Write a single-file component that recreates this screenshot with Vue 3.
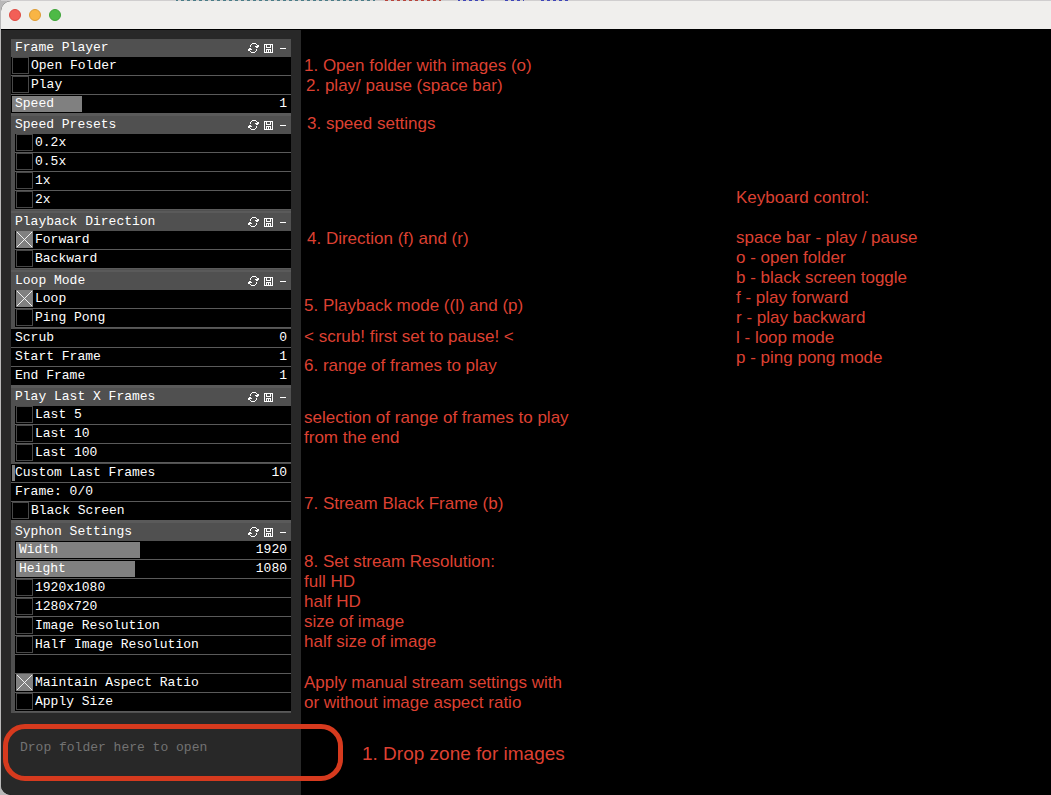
<script setup>
import { reactive } from 'vue'

const sections = reactive([
  { root: true, label: 'Frame Player', items: [
    { type: 'check', label: 'Open Folder' },
    { type: 'check', label: 'Play' },
    { type: 'slider', label: 'Speed', value: 1, min: 0, max: 4, fill: 25 },
  ] },
  { label: 'Speed Presets', items: [
    { type: 'check', label: '0.2x' },
    { type: 'check', label: '0.5x' },
    { type: 'check', label: '1x' },
    { type: 'check', label: '2x' },
  ] },
  { label: 'Playback Direction', items: [
    { type: 'check', label: 'Forward', on: true },
    { type: 'check', label: 'Backward' },
  ] },
  { label: 'Loop Mode', items: [
    { type: 'check', label: 'Loop', on: true },
    { type: 'check', label: 'Ping Pong' },
  ] },
  { bare: true, items: [
    { type: 'slider', label: 'Scrub', value: 0, min: 0, max: 100, fill: 0 },
    { type: 'slider', label: 'Start Frame', value: 1, min: 1, max: 100, fill: 0 },
    { type: 'slider', label: 'End Frame', value: 1, min: 1, max: 100, fill: 0 },
  ] },
  { label: 'Play Last X Frames', items: [
    { type: 'check', label: 'Last 5' },
    { type: 'check', label: 'Last 10' },
    { type: 'check', label: 'Last 100' },
  ] },
  { bare: true, items: [
    { type: 'slider', label: 'Custom Last Frames', value: 10, min: 1, max: 1000, fill: 1 },
    { type: 'text', label: 'Frame: 0/0' },
    { type: 'check', label: 'Black Screen' },
  ] },
  { label: 'Syphon Settings', items: [
    { type: 'slider', label: 'Width', value: 1920, min: 1, max: 4096, fill: 45 },
    { type: 'slider', label: 'Height', value: 1080, min: 1, max: 2480, fill: 43 },
    { type: 'check', label: '1920x1080' },
    { type: 'check', label: '1280x720' },
    { type: 'check', label: 'Image Resolution' },
    { type: 'check', label: 'Half Image Resolution' },
    { type: 'text', label: '' },
    { type: 'check', label: 'Maintain Aspect Ratio', on: true },
    { type: 'check', label: 'Apply Size' },
  ] },
])

const notes = [
  { x: 3, y: 26, text: '1. Open folder with images (o)' },
  { x: 5, y: 46, text: '2. play/ pause (space bar)' },
  { x: 6, y: 84, text: '3. speed settings' },
  { x: 6, y: 199, text: '4. Direction (f) and (r)' },
  { x: 3, y: 266, text: '5. Playback mode ((l) and (p)' },
  { x: 3, y: 297, text: '< scrub! first set to pause! <' },
  { x: 3, y: 326, text: '6. range of frames to play' },
  { x: 3, y: 378, text: 'selection of range of frames to play\nfrom the end' },
  { x: 3, y: 464, text: '7. Stream Black Frame (b)' },
  { x: 3, y: 522, text: '8. Set stream Resolution:\nfull HD\nhalf HD\nsize of image\nhalf size of image' },
  { x: 3, y: 643, text: 'Apply manual stream settings with\nor without image aspect ratio' },
  { x: 61, y: 714, text: '1. Drop zone for images', big: true },
  { x: 435, y: 158, text: 'Keyboard control:\n\nspace bar - play / pause\no - open folder\nb - black screen toggle\nf - play forward\nr - play backward\nl - loop mode\np - ping pong mode' },
]
</script>

<template>
  <div class="desktop">
    <div class="behind"></div>
    <div class="window">
      <header class="titlebar">
        <button class="light close" aria-label="Close"></button>
        <button class="light minimize" aria-label="Minimize"></button>
        <button class="light maximize" aria-label="Zoom"></button>
      </header>
      <div class="body">
        <aside class="side">
          <div class="panel">
            <section v-for="(s, i) in sections" :key="i" :class="{ group: !s.root && !s.bare }">
              <h2 v-if="!s.bare" class="head">
                <span class="title">{{ s.label }}</span>
                <button class="tool" aria-label="Reload">
                  <svg width="11" height="10" viewBox="0 0 11 10" shape-rendering="crispEdges" fill="currentColor">
                    <path d="M4 0h4v1H4zM3 1h1v1H3zM8 1h1v1H8zM2 2h1v2H2zM9 2h2v1H9zM7 3h4v1H7zM8 4h2v1H8zM1 5h2v1H1zM0 6h4v1H0zM0 7h2v1H0zM8 6h1v2H8zM2 8h1v1H2zM7 8h1v1H7zM3 9h4v1H3z" />
                  </svg>
                </button>
                <button class="tool" aria-label="Save">
                  <svg width="9" height="9" viewBox="0 0 9 9" shape-rendering="crispEdges" fill="currentColor">
                    <path fill-rule="evenodd" d="M0 0h9v9H0zM1 1v7h1V5h5v3h1V1H7v3H2V1zM3 1v2h3V1zM3 6v2h1V6zM5 6v2h1V6z" />
                  </svg>
                </button>
                <button class="tool" aria-label="Collapse">
                  <svg width="8" height="9" viewBox="0 0 8 9" shape-rendering="crispEdges" fill="currentColor">
                    <path d="M2 4h6v1H2z" />
                  </svg>
                </button>
              </h2>
              <template v-for="(it, j) in s.items" :key="j">
                <label v-if="it.type === 'check'" class="row check">
                  <input v-model="it.on" type="checkbox" />
                  <svg class="box" :class="{ on: it.on }" width="17" height="17" viewBox="0 0 17 17">
                    <path v-if="it.on" d="M0 0l17 17M17 0L0 17" />
                  </svg>
                  <span>{{ it.label }}</span>
                </label>
                <label v-else-if="it.type === 'slider'" class="row slider">
                  <input v-model="it.value" type="range" :min="it.min" :max="it.max" />
                  <span class="fill" :style="{ width: it.fill + '%' }"></span>
                  <span class="name">{{ it.label }}</span>
                  <span class="value">{{ it.value }}</span>
                </label>
                <div v-else class="row text">{{ it.label }}</div>
              </template>
            </section>
          </div>
          <p class="hint">Drop folder here to open</p>
          <div class="zone"></div>
        </aside>
        <main class="canvas">
          <p
            v-for="n in notes"
            :key="n.text"
            class="note"
            :class="{ big: n.big }"
            :style="{ left: n.x + 'px', top: n.y + 'px' }"
          >{{ n.text }}</p>
        </main>
      </div>
    </div>
  </div>
</template>

<style>
body {
  background: #b9b8b8;
}
</style>

<style scoped>
.desktop {
  box-sizing: border-box;
  min-height: 100vh;
  padding-left: 1px;
  display: flex;
  flex-direction: column;
  background: #b9b8b8;
}
/* Sliver of the code editor that shows above the window */
.behind {
  height: 1px;
  background:
    repeating-linear-gradient(90deg, transparent 0 3px, #d0cecf 3px 6px),
    linear-gradient(90deg, #d0cecf 175px, #4b7d88 175px 374px, #d0cecf 374px 384px, #b8443c 384px 440px, #d0cecf 440px 457px, #4046b8 457px 485px, #d0cecf 485px 502px, #4046b8 502px 523px, #d0cecf 523px 539px, #4046b8 539px 568px, #d0cecf 568px);
}
.window {
  flex: 1;
  display: flex;
  flex-direction: column;
  border-radius: 10px 0 0 10px;
  overflow: hidden;
  background: #000;
}
.titlebar {
  height: 28px;
  display: flex;
  align-items: center;
  gap: 8px;
  padding-left: 8px;
  background: #f0efed;
}
.light {
  width: 12px;
  height: 12px;
  padding: 0;
  border: 1px solid;
  border-radius: 50%;
}
.close { background: #f25f57; border-color: #dc4a41; }
.minimize { background: #f9b544; border-color: #dc9b33; }
.maximize { background: #4dba46; border-color: #3da237; }
.body {
  flex: 1;
  display: flex;
  border-top: 1px solid #000;
}
.side {
  position: relative;
  box-sizing: border-box;
  width: 300px;
  flex: none;
  padding: 9px 10px 0;
  background: #282828;
  font: 13px/18px "Liberation Mono", monospace;
  color: #fff;
}
.panel {
  display: flow-root;
}
.group {
  border-left: 4px solid #505050;
  border-bottom: 1px solid #505050;
}
.head {
  display: flex;
  align-items: center;
  gap: 5px;
  height: 18px;
  margin: 0;
  padding: 0 5px 0 4px;
  background: #505050;
  font: inherit;
}
.group .head {
  margin-left: -4px;
  border-top: 2px solid #5a5a5a;
}
.title {
  flex: 1;
}
.tool {
  display: flex;
  padding: 0;
  border: 0;
  background: none;
  color: #fff;
}
.row {
  position: relative;
  display: flex;
  align-items: center;
  box-sizing: border-box;
  height: 19px;
  border-bottom: 1px solid #5a5a5a;
  background: #000;
  white-space: pre;
}
.row input {
  position: absolute;
  inset: 0;
  width: 100%;
  height: 100%;
  margin: 0;
  opacity: 0;
}
.check {
  gap: 2px;
  padding-left: 1px;
}
.box {
  box-sizing: border-box;
  align-self: flex-start;
  border: 1px solid #484848;
}
.box.on {
  border-color: #808080;
  background: #808080;
}
.box path {
  stroke: #fff;
}
.slider {
  padding: 0 4px;
}
.fill {
  position: absolute;
  left: 1px;
  top: 1px;
  bottom: 1px;
  background: #808080;
}
.name {
  position: relative;
  flex: 1;
}
.text {
  padding-left: 4px;
}
.hint {
  margin: 26px 0 0 9px;
  color: #737373;
}
.zone {
  position: absolute;
  left: 2px;
  top: 694px;
  z-index: 1;
  box-sizing: border-box;
  width: 340px;
  height: 57px;
  border: 5px solid #d63a1e;
  border-radius: 22px;
}
.canvas {
  position: relative;
  flex: 1;
  font: 17px/20px "Liberation Sans", Arial, sans-serif;
  color: #dd4032;
}
.note {
  position: absolute;
  margin: 0;
  white-space: pre;
}
.big {
  font-size: 19px;
}
</style>
